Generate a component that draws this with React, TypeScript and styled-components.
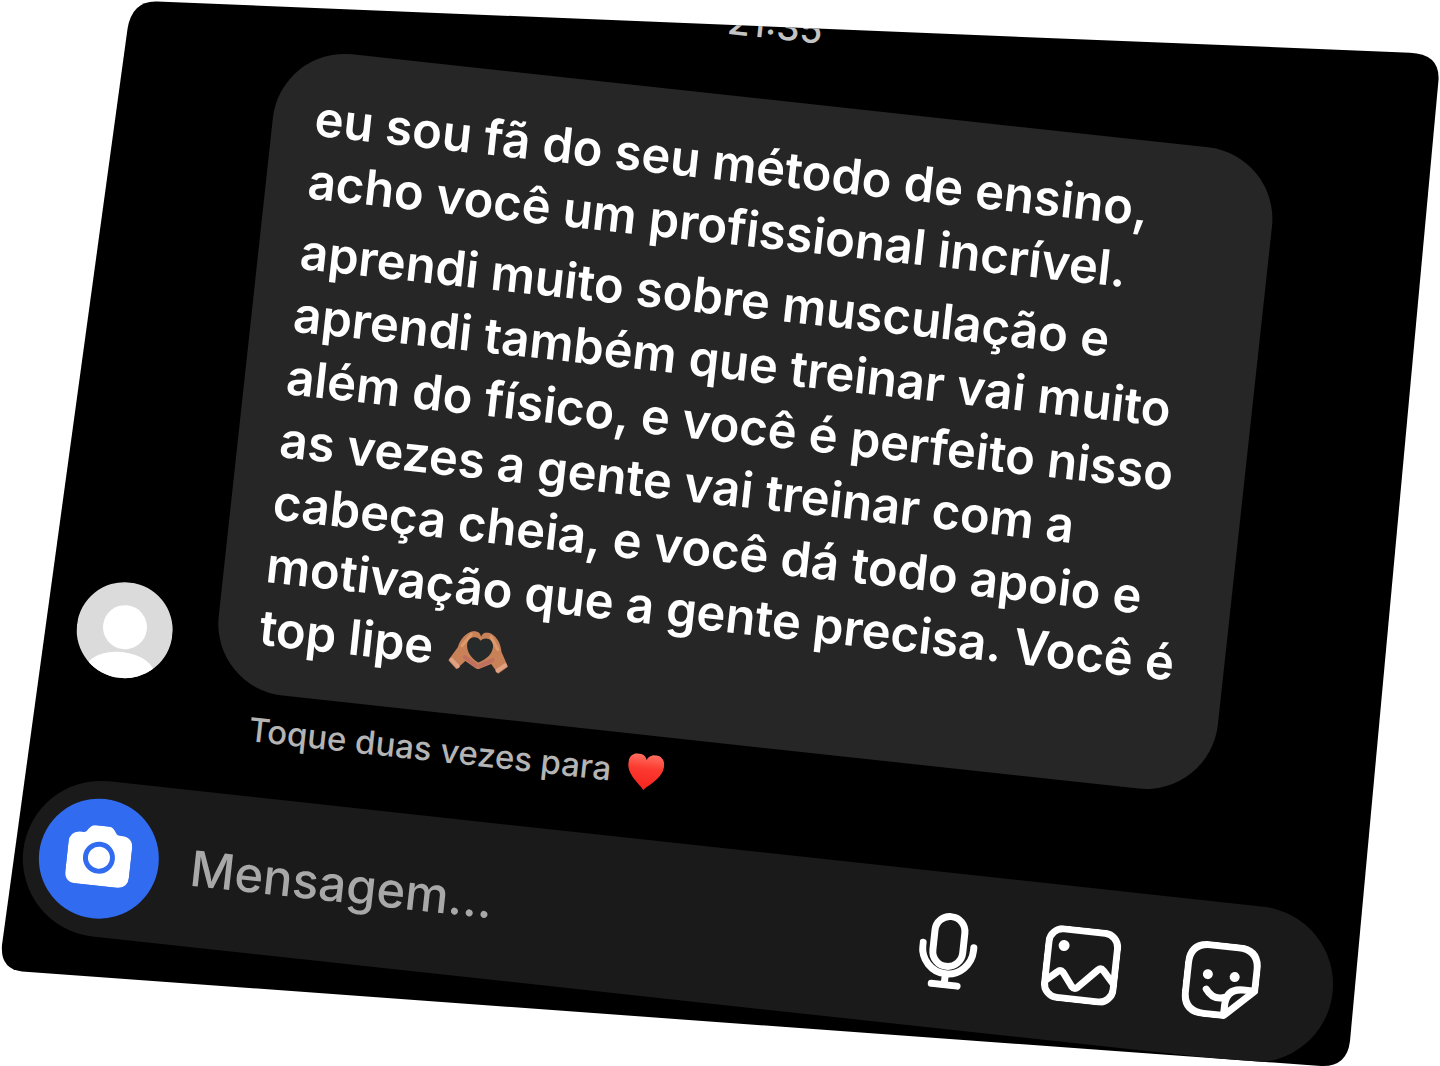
import React from "react";
import styled, { createGlobalStyle } from "styled-components";

const GlobalStyle = createGlobalStyle`
  *, *::before, *::after { box-sizing: border-box; }
  body {
    margin: 0;
    background: #fff;
    font-family: Inter, "Liberation Sans", sans-serif;
  }
`;

const Card = styled.main`
  overflow: hidden;
  padding-bottom: 146px;
  background: #000;
  clip-path: url(#card-outline);
`;

const Thread = styled.section`
  margin-top: -78px;
  padding: 0 8px 0 115px;
  transform: rotate(6.2deg);
  transform-origin: 0 78px;
`;

const Time = styled.time`
  display: block;
  margin-bottom: 54px;
  color: #c4c4c4;
  font-size: 37px;
  font-weight: 500;
  line-height: 40px;
  text-align: center;
`;

const MessageRow = styled.article`
  display: flex;
  align-items: flex-end;
  gap: 44px;
  padding: 0 143px 0 29px;
`;

const Avatar = styled.svg`
  flex: none;
  width: 96px;
  height: 96px;
`;

const Bubble = styled.div`
  display: flex;
  flex: 1;
  flex-direction: column;
  gap: 8px;
  padding: 36px 42px 34px;
  border-radius: 72px;
  background: #262626;
`;

const Paragraph = styled.p`
  margin: 0;
  color: #fff;
  font-size: 49px;
  font-weight: 600;
  line-height: 63px;
  white-space: pre;
`;

const Hands = styled.svg`
  width: 60px;
  height: 42px;
  margin-left: 4px;
  vertical-align: -5px;
`;

const Hint = styled.p`
  display: flex;
  align-items: center;
  gap: 16px;
  margin: 17px 0 47px 211px;
  color: #b4b4b4;
  font-size: 33px;
  font-weight: 500;
  line-height: 40px;
`;

const Heart = styled.svg`
  width: 36px;
  height: 36px;
`;

const Composer = styled.form`
  display: flex;
  align-items: center;
  gap: 65px;
  padding: 18px 74px 18px 16px;
  border-radius: 78px;
  background: #1a1a1a;
`;

const Field = styled.div`
  display: flex;
  flex: 1;
  align-items: center;
  gap: 32px;
  min-width: 0;
`;

const CameraButton = styled.button`
  display: grid;
  flex: none;
  place-items: center;
  width: 120px;
  height: 120px;
  padding: 0 0 6px;
  border: 0;
  border-radius: 50%;
  background: #316bf0;
`;

const MessageInput = styled.input`
  flex: 1;
  min-width: 0;
  padding: 0;
  border: 0;
  outline: 0;
  background: transparent;
  color: #fff;
  font: 500 49px/60px Inter, "Liberation Sans", sans-serif;

  &::placeholder {
    color: #a8a8a8;
    opacity: 1;
  }
`;

const IconButton = styled.button`
  display: block;
  flex: none;
  padding: 0;
  border: 0;
  background: transparent;
  color: #fff;
`;

const Icon = styled.svg<{ $width: number }>`
  display: block;
  width: ${(p) => p.$width}px;
  height: 76px;
  fill: none;
  stroke: currentColor;
  stroke-width: 7;
  stroke-linecap: round;
  stroke-linejoin: round;
`;

const Outline = styled.svg`
  position: absolute;
  width: 0;
  height: 0;
`;

function CardOutline() {
  return (
    <Outline aria-hidden="true">
      <clipPath id="card-outline" clipPathUnits="objectBoundingBox">
        <path
          transform="scale(0.000694444 0.000938086)"
          d="M127.500 29Q132 .5 157 1.500L1410 52.700Q1440 54 1438.500 80L1350 1040Q1347 1066 1321 1065L22 970.500Q0 968 2 944Z"
        />
      </clipPath>
    </Outline>
  );
}

function HeartHands() {
  return (
    <Hands viewBox="0 0 60 42" role="img" aria-label="mãos formando um coração">
      <path
        d="M0 32L8 18C10 9 14 4 20 1C25-1 29 1 30 5C31 1 35-1 40 1C46 4 50 9 52 18L60 32L51 40L43 31L32 37Q30 38 28 37L17 31L9 40Z"
        fill="#c98258"
      />
      <path d="M30 31C22 27 17 21 17 14C17 6 26 4 30 9C34 4 43 6 43 14C43 21 38 27 30 31Z" fill="#26292a" />
      <path d="M16 27L28 34M44 27L32 34" fill="none" stroke="#c0705f" strokeWidth="4" strokeLinecap="round" />
      <path d="M3 31L10 37M57 31L50 37" fill="none" stroke="#e0a184" strokeWidth="4" strokeLinecap="round" />
      <path d="M20 4L12 16M40 4L48 16" fill="none" stroke="#dc9a6c" strokeWidth="3" strokeLinecap="round" />
    </Hands>
  );
}

export default function App() {
  return (
    <>
      <GlobalStyle />
      <CardOutline />
      <Card>
        <Thread>
          <Time>21:35</Time>
          <MessageRow>
            <Avatar viewBox="0 0 96 96" role="img" aria-label="Foto do perfil">
              <clipPath id="avatar-circle">
                <circle cx="48" cy="48" r="48" />
              </clipPath>
              <g clipPath="url(#avatar-circle)">
                <rect width="96" height="96" fill="#dbdbdb" />
                <circle cx="48" cy="45" r="22" fill="#fff" />
                <ellipse cx="48" cy="91" rx="35" ry="21" fill="#fff" />
              </g>
            </Avatar>
            <Bubble>
              <Paragraph>
                {"eu sou fã do seu método de ensino,\nacho você um profissional incrível."}
              </Paragraph>
              <Paragraph>
                {"aprendi muito sobre musculação e\naprendi também que treinar vai muito\nalém do físico, e você é perfeito nisso\nas vezes a gente vai treinar com a\ncabeça cheia, e você dá todo apoio e\nmotivação que a gente precisa. Você é\ntop lipe "}
                <HeartHands />
              </Paragraph>
            </Bubble>
          </MessageRow>
          <Hint>
            Toque duas vezes para
            <Heart viewBox="0 0 36 36" role="img" aria-label="coração">
              <defs>
                <linearGradient id="heart-fill" x1="0" y1="0" x2="0" y2="1">
                  <stop offset="0" stopColor="#ff7061" />
                  <stop offset=".4" stopColor="#fc3a30" />
                  <stop offset="1" stopColor="#f3241f" />
                </linearGradient>
              </defs>
              <path
                d="M18 36C15 31 0 23 0 10C0 3 5 0 9 0C13 0 17 2 18 6C19 2 23 0 27 0C31 0 36 3 36 10C36 23 21 31 18 36Z"
                fill="url(#heart-fill)"
              />
            </Heart>
          </Hint>
          <Composer onSubmit={(e) => e.preventDefault()}>
            <Field>
              <CameraButton type="button" aria-label="Câmera">
                <svg width="64" height="60" viewBox="0 0 64 60" aria-hidden="true">
                  <path
                    d="M12 8H14C19 8 18 0 26 0H38C46 0 45 8 50 8H52Q64 8 64 20V48Q64 60 52 60H12Q0 60 0 48V20Q0 8 12 8Z"
                    fill="#fff"
                  />
                  <circle cx="32" cy="32" r="13.500" fill="none" stroke="#316bf0" strokeWidth="5" />
                </svg>
              </CameraButton>
              <MessageInput type="text" aria-label="Mensagem" placeholder="Mensagem..." />
            </Field>
            <IconButton type="button" aria-label="Gravar áudio">
              <Icon $width={60} viewBox="0 0 60 76" aria-hidden="true">
                <rect x="14" y="3.500" width="30" height="50" rx="15" />
                <path d="M3.500 32V35A25.500 26 0 0 0 54.500 35V32M29 61V72M16 72H42" />
              </Icon>
            </IconButton>
            <IconButton type="button" aria-label="Enviar foto">
              <Icon $width={76} viewBox="0 0 76 76" aria-hidden="true">
                <rect x="3.500" y="3.500" width="69" height="69" rx="14" />
                <path d="M5 56L15 47Q18 44 21 47L31 60Q34 63 37 60L55 41Q58 38 61 41L72 53" />
                <circle cx="19" cy="20" r="5.500" fill="currentColor" stroke="none" />
              </Icon>
            </IconButton>
            <IconButton type="button" aria-label="Figurinhas">
              <Icon $width={76} viewBox="0 0 76 76" aria-hidden="true">
                <path d="M44 72.500H24Q3.500 72.500 3.500 52V24Q3.500 3.500 24 3.500H52Q72.500 3.500 72.500 24V45L44 72.500ZM44 72V62Q44 45 61 45H72M24 48Q32 59 44 54" />
                <circle cx="24" cy="33" r="5" fill="currentColor" stroke="none" />
                <circle cx="51" cy="33" r="5" fill="currentColor" stroke="none" />
              </Icon>
            </IconButton>
          </Composer>
        </Thread>
      </Card>
    </>
  );
}
